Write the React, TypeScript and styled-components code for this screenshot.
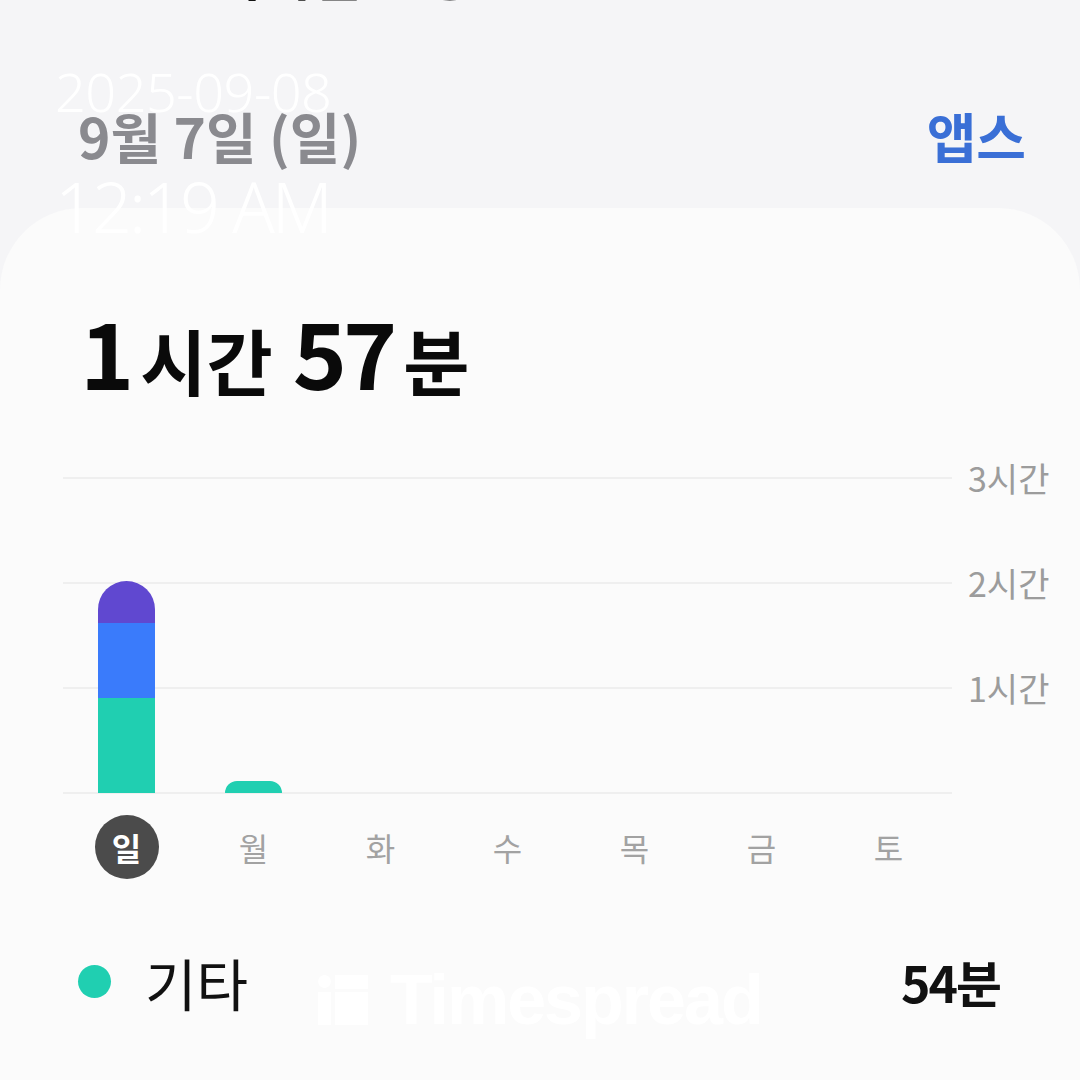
import React from 'react'
import styled, { createGlobalStyle } from 'styled-components'

const GlobalStyle = createGlobalStyle`
  html, body {
    margin: 0;
    padding: 0;
    background: #f5f5f7;
    overflow: hidden;
  }
  body {
    font-family: 'Noto Sans CJK KR', 'Noto Sans', sans-serif;
  }
`

const PX_PER_MIN = 105.33 / 60

interface Segment {
  minutes: number
  color: string
}

interface Day {
  label: string
  segments: Segment[]
}

const TEAL = '#20cfb1'
const BLUE = '#3a7bfb'
const PURPLE = '#6048d0'

const days: Day[] = [
  {
    label: '일',
    segments: [
      { minutes: 54, color: TEAL },
      { minutes: 43, color: BLUE },
      { minutes: 23.5, color: PURPLE },
    ],
  },
  { label: '월', segments: [{ minutes: 7, color: TEAL }] },
  { label: '화', segments: [] },
  { label: '수', segments: [] },
  { label: '목', segments: [] },
  { label: '금', segments: [] },
  { label: '토', segments: [] },
]

const gridLabels = ['3시간', '2시간', '1시간', '']

const Page = styled.div`
  position: relative;
  width: 1080px;
  height: 1080px;
  overflow: hidden;
  background: #f5f5f7;
`

const Title = styled.h1`
  margin: -59px 0 0 212px;
  height: 64px;
  font-size: 54px;
  font-weight: 700;
  line-height: 64px;
  color: #111;
`

const DateRow = styled.div`
  display: flex;
  align-items: baseline;
  justify-content: space-between;
  padding: 103px 54px 0 78px;
  height: 128px;
  box-sizing: border-box;
`

const DateText = styled.div`
  font-size: 55px;
  font-weight: 700;
  line-height: 1;
  color: #8a8a8f;
`

const AppsLink = styled.div`
  font-size: 54px;
  font-weight: 700;
  line-height: 1;
  color: #3a6fd6;
`

const Card = styled.div`
  margin-top: 75px;
  height: 900px;
  background: #fbfbfb;
  border-radius: 82px 82px 0 0;
  padding-top: 96px;
  box-sizing: border-box;
`

const Total = styled.div`
  display: flex;
  align-items: baseline;
  margin-left: 80px;
  color: #0a0a0a;
  line-height: 1;
  height: 96px;
`

const Num = styled.span`
  font-size: 92px;
  font-weight: 700;
  letter-spacing: -4px;
`

const Unit = styled.span<{ $gap?: boolean }>`
  font-size: 72px;
  font-weight: 700;
  margin-left: 10px;
  margin-right: ${p => (p.$gap ? '20px' : '0')};
`

const Chart = styled.div`
  display: grid;
  margin: 77px 0 0 63px;
  width: 1000px;
`

const LinesLayer = styled.div`
  grid-area: 1 / 1;
  display: flex;
  flex-direction: column;
  justify-content: space-between;
  height: 317px;
`

const GridRow = styled.div`
  display: flex;
  align-items: center;
  height: 1px;
`

const GridLine = styled.div`
  flex: 0 0 889px;
  height: 2px;
  background: #efefef;
`

const GridLabel = styled.div`
  margin-left: 16px;
  font-size: 34px;
  color: #9c9c9c;
  line-height: 40px;
  white-space: nowrap;
`

const BarsLayer = styled.div`
  grid-area: 1 / 1;
  display: grid;
  grid-template-columns: repeat(7, 127px);
  align-items: end;
  height: 316px;
  width: 889px;
`

const BarSlot = styled.div`
  display: flex;
  justify-content: center;
  align-items: flex-end;
  height: 100%;
`

const Bar = styled.div`
  display: flex;
  flex-direction: column-reverse;
  width: 57px;
  border-radius: 28.5px 28.5px 0 0;
  overflow: hidden;
`

const BarSegment = styled.div<{ $color: string }>`
  background: ${p => p.$color};
`

const DayRow = styled.div`
  display: grid;
  grid-template-columns: repeat(7, 127px);
  margin: 21px 0 0 63px;
  height: 64px;
`

const DayLabel = styled.div<{ $active?: boolean }>`
  justify-self: center;
  display: flex;
  align-items: center;
  justify-content: center;
  width: 64px;
  height: 64px;
  border-radius: 50%;
  font-size: 32px;
  font-weight: ${p => (p.$active ? 700 : 400)};
  color: ${p => (p.$active ? '#ffffff' : '#a2a2a2')};
  background: ${p => (p.$active ? '#4b4b4b' : 'transparent')};
`

const LegendList = styled.div`
  display: flex;
  flex-direction: column;
  gap: 42px;
  margin-top: 62px;
`

const LegendRow = styled.div`
  display: flex;
  align-items: center;
  height: 80px;
  padding: 0 80px 0 78px;
`

const Dot = styled.span<{ $color: string }>`
  width: 33px;
  height: 33px;
  border-radius: 50%;
  background: ${p => p.$color};
  flex: none;
`

const LegendName = styled.span`
  margin-left: 34px;
  font-size: 56px;
  color: #111;
  flex: 1;
`

const LegendValue = styled.span`
  font-size: 50px;
  font-weight: 700;
  color: #111;
  letter-spacing: -2px;
`

const Stamp = styled.div`
  position: absolute;
  left: 55px;
  top: 64px;
  color: #ffffff;
  font-family: 'Noto Sans', sans-serif;
  font-weight: 300;
  line-height: 1;
`

const StampDate = styled.div`
  font-size: 54px;
  letter-spacing: -0.5px;
`

const StampTime = styled.div`
  margin-top: 53px;
  font-size: 70px;
  letter-spacing: -3px;
`

const Watermark = styled.div`
  position: absolute;
  left: 318px;
  top: 960px;
  display: flex;
  align-items: center;
  gap: 22px;
  color: #ffffff;
  font-family: 'Liberation Sans', Arial, sans-serif;
  font-weight: 700;
  font-size: 70px;
  letter-spacing: -2px;
`

const Logo = () => (
  <svg width='50' height='50' viewBox='0 0 50 50' fill='#ffffff'>
    <circle cx='6.5' cy='6.5' r='6.5' />
    <rect x='0' y='17' width='13' height='33' />
    <rect x='17' y='0' width='33' height='14' />
    <rect x='17' y='17' width='33' height='33' />
  </svg>
)

export default function App() {
  return (
    <Page>
      <GlobalStyle />
      <Title>디지털 웰빙</Title>
      <DateRow>
        <DateText>9월 7일 (일)</DateText>
        <AppsLink>앱스</AppsLink>
      </DateRow>
      <Card>
        <Total>
          <Num>1</Num>
          <Unit $gap>시간</Unit>
          <Num>57</Num>
          <Unit>분</Unit>
        </Total>
        <Chart>
          <LinesLayer>
            {gridLabels.map((label, i) => (
              <GridRow key={i}>
                <GridLine />
                <GridLabel>{label}</GridLabel>
              </GridRow>
            ))}
          </LinesLayer>
          <BarsLayer>
            {days.map(day => (
              <BarSlot key={day.label}>
                {day.segments.length > 0 && (
                  <Bar>
                    {day.segments.map((s, i) => (
                      <BarSegment key={i} $color={s.color} style={{ height: s.minutes * PX_PER_MIN }} />
                    ))}
                  </Bar>
                )}
              </BarSlot>
            ))}
          </BarsLayer>
        </Chart>
        <DayRow>
          {days.map((day, i) => (
            <DayLabel key={day.label} $active={i === 0}>{day.label}</DayLabel>
          ))}
        </DayRow>
        <LegendList>
          <LegendRow>
            <Dot $color={TEAL} />
            <LegendName>기타</LegendName>
            <LegendValue>54분</LegendValue>
          </LegendRow>
          <LegendRow>
            <Dot $color={BLUE} />
            <LegendName>삼성 인터넷</LegendName>
            <LegendValue>43분</LegendValue>
          </LegendRow>
        </LegendList>
      </Card>
      <Stamp>
        <StampDate>2025-09-08</StampDate>
        <StampTime>12:19 AM</StampTime>
      </Stamp>
      <Watermark>
        <Logo />
        <span>Timespread</span>
      </Watermark>
    </Page>
  )
}
